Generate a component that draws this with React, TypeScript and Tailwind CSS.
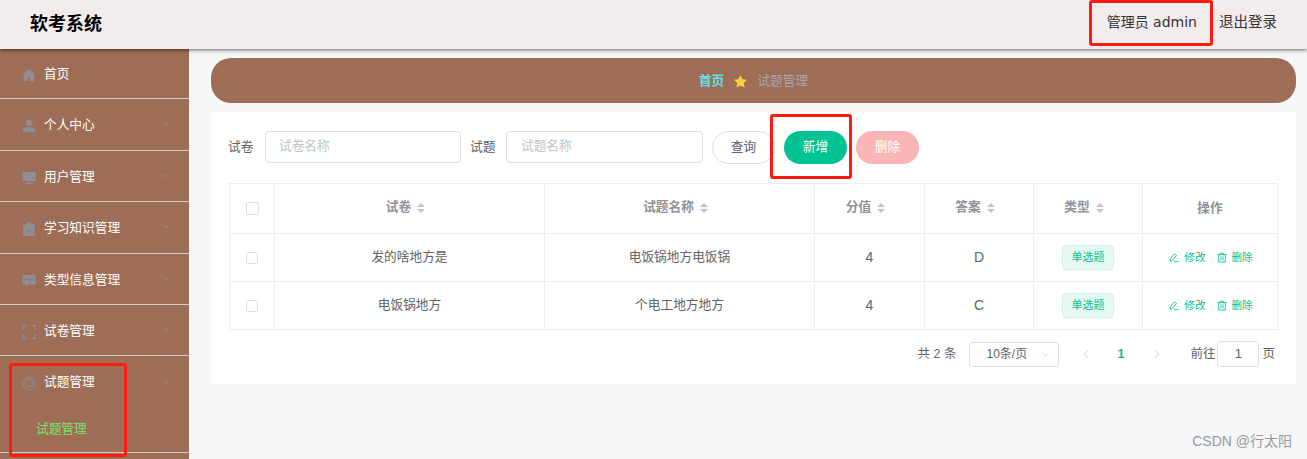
import { ChevronDown, ChevronUp, ChevronLeft, ChevronRight } from 'lucide-react';

const cjk = "font-['Liberation_Sans','Noto_Sans_CJK_SC',sans-serif]";

function HomeIcon() {
    return <svg viewBox="0 0 16 16" className="w-[14px] h-[14px]"><path d="M8 1 .5 8H2v7h4.500v-4.500h3V15H14V8h1.500z" fill="#8f8d96" /></svg>;
}
function UserIcon() {
    return <svg viewBox="0 0 16 16" className="w-[14px] h-[14px]"><circle cx="8" cy="4.500" r="3.800" fill="#8f8d96" /><path d="M1 15v-2.500C1 10.500 3 9.500 4.500 9.500h7c1.500 0 3.500 1 3.500 3V15z" fill="#8f8d96" /></svg>;
}
function MonitorIcon() {
    return <svg viewBox="0 0 16 16" className="w-[14px] h-[14px]"><path d="M.5 1h15v10.500H.5zM7 12h2v1.500h3.500V15h-9v-1.500H7z" fill="#8f8d96" /></svg>;
}
function ClipboardIcon() {
    return <svg viewBox="0 0 16 16" className="w-[14px] h-[14px]"><path d="M1.500 2.500H5V.5h6v2h3.500V16h-13z" fill="#8f8d96" /><path d="m5 9.500 2.200 2.300L11 7.500" fill="none" stroke="#9d6e55" strokeWidth="1" /></svg>;
}
function ChatIcon() {
    return <svg viewBox="0 0 16 16" className="w-[14px] h-[14px]"><path d="M.5 1h15v11H7.500L4.500 15v-3h-4z" fill="#8f8d96" /><circle cx="4.800" cy="6.500" r="1" fill="#9d6e55" /><circle cx="8" cy="6.500" r="1" fill="#9d6e55" /><circle cx="11.200" cy="6.500" r="1" fill="#9d6e55" /></svg>;
}
function FrameIcon() {
    return <svg viewBox="0 0 16 16" className="w-[14px] h-[14px]"><path d="M5 1H1v4M11 1h4v4M5 15H1v-4M11 15h4v-4" fill="none" stroke="#8f8d96" strokeWidth="1.500" /></svg>;
}
function RingIcon() {
    return <svg viewBox="0 0 16 16" className="w-[15px] h-[15px]"><circle cx="8" cy="8" r="7.200" fill="none" stroke="#8f8d96" strokeWidth="1.100" /><circle cx="8" cy="7.500" r="4.200" fill="none" stroke="#8f8d96" strokeWidth="1.300" /></svg>;
}
function EditIcon() {
    return <svg viewBox="0 0 12 12" className="w-[10px] h-[11px]" fill="none" stroke="#00c292" strokeWidth="1"><path d="M6.500 1.500 9 3.500 4 9.500 1.500 10.500 1.800 7.500z" /><path d="M6 11h5.500" /></svg>;
}
function TrashIcon() {
    return <svg viewBox="0 0 12 12" className="w-[10px] h-[11px]" fill="none" stroke="#00c292" strokeWidth="1"><path d="M.5 2.500h11M4 2.500V.8h4v1.700M2 2.500v9h8v-9M4.800 4.500v5M7.200 4.500v5" /></svg>;
}
function SortCaret() {
    return (
        <span className="inline-flex flex-col gap-[2px] ml-[6px] align-middle">
            <span className="w-0 h-0 border-x-[4px] border-x-transparent border-b-[4px] border-b-[#c0c4cc]" />
            <span className="w-0 h-0 border-x-[4px] border-x-transparent border-t-[4px] border-t-[#c0c4cc]" />
        </span>
    );
}

const menus = [
    { label: '首页', icon: <HomeIcon />, h: 'h-[50px] pt-[2px]', arrow: false },
    { label: '个人中心', icon: <UserIcon />, h: 'h-[52px] pt-[3px]', arrow: true },
    { label: '用户管理', icon: <MonitorIcon />, h: 'h-[51px] pt-[3px]', arrow: true },
    { label: '学习知识管理', icon: <ClipboardIcon />, h: 'h-[52px] pt-[2px]', arrow: true },
    { label: '类型信息管理', icon: <ChatIcon />, h: 'h-[51px] pt-[3px]', arrow: true },
    { label: '试卷管理', icon: <FrameIcon />, h: 'h-[51px] pt-[3px]', arrow: true },
];

const rows = [
    { paper: '发的啥地方是', name: '电饭锅地方电饭锅', score: 4, answer: 'D' },
    { paper: '电饭锅地方', name: '个电工地方地方', score: 4, answer: 'C' },
];

const headers = ['试卷', '试题名称', '分值', '答案', '类型'];

export default function App() {
    return (
        <div className={`${cjk} w-[1307px] h-[459px] overflow-hidden relative bg-[#f6f7f9] text-[12.7px]`}>
            {/* 상단 헤더 */}
            <header className="relative z-10 h-[49px] bg-[#f3ecec] flex items-center justify-between pl-[30px] pr-[30px] shadow-[0_1px_4px_rgba(0,0,0,0.6)]">
                <h1 className="text-[18px] font-bold text-black">软考系统</h1>
                <div className="flex items-center gap-[22px] text-[14.500px] text-[#333] pb-[4px]">
                    <span className="font-['DejaVu_Sans','Noto_Sans_CJK_SC',sans-serif] text-[14px]">管理员 admin</span>
                    <span>退出登录</span>
                </div>
            </header>

            <div className="flex h-[410px]">
                <aside className="w-[189px] shrink-0 bg-[#9d6e55] text-white">
                    {menus.map((m) => (
                        <div key={m.label} className={`${m.h} flex items-center pl-[22px] pr-[17px] border-b border-[#d2cdcb]`}>
                            <span className="w-[14px] mr-[8px] flex justify-center">{m.icon}</span>
                            <span className="flex-1">{m.label}</span>
                            {m.arrow && <ChevronDown size={13} strokeWidth={1} className="text-[#b99d8c] -mt-[5px]" />}
                        </div>
                    ))}
                    <div className="h-[97px] border-b border-[#d2cdcb]">
                        <div className="h-[52px] pt-[2px] flex items-center pl-[22px] pr-[17px]">
                            <span className="w-[14px] mr-[8px] flex justify-center"><RingIcon /></span>
                            <span className="flex-1">试题管理</span>
                            <ChevronUp size={13} strokeWidth={1} className="text-[#b99d8c] -mt-[2px]" />
                        </div>
                        <div className="pl-[36px] pt-[12px] text-[#7ee06e]">试题管理</div>
                    </div>
                </aside>

                <main className="w-[1085px] ml-[22px] pt-[9px]">
                    <nav className="h-[45px] pt-[2px] rounded-[20px] bg-[#9d6e55] flex items-center justify-center">
                        <span className="font-bold text-[#5fe3e8]">首页</span>
                        <svg viewBox="0 0 24 24" className="w-[15px] h-[15px] mx-[9px]"><path d="m12 1.500 3.300 6.700 7.200 1.100-5.200 5.100 1.200 7.300L12 18.200l-6.500 3.500 1.200-7.300L1.500 9.300l7.200-1.100z" fill="#fbd13c" /></svg>
                        <span className="text-[#a8a4ae]">试题管理</span>
                    </nav>

                    <section className="mt-[9px] h-[272px] bg-white pl-[17px] pr-[18px] pt-[19px]">
                        <div className="flex items-start h-[33px] text-[#606266]">
                            <span className="w-[37px] leading-[32px]">试卷</span>
                            <div className="w-[196px] h-[32px] border border-[#dcdfe6] rounded-[4px] flex items-center pl-[13px] text-[#c0c4cc]">试卷名称</div>
                            <span className="ml-[9px] w-[36px] leading-[32px]">试题</span>
                            <div className="w-[197px] h-[32px] border border-[#dcdfe6] rounded-[4px] flex items-center pl-[14px] text-[#c0c4cc]">试题名称</div>
                            <button className="ml-[9px] w-[63px] h-[33px] rounded-full border border-[#dcdfe6] bg-white text-[#606266]">查询</button>
                            <button className="ml-[9px] w-[63px] h-[33px] rounded-full bg-[#00c292] text-white">新增</button>
                            <button className="ml-[9px] w-[63px] h-[33px] rounded-full bg-[#fab6b6] text-white">删除</button>
                        </div>

                        <table className="mt-[19px] ml-[1px] w-[1048px] table-fixed border-collapse text-[#606266]">
                            <colgroup>
                                <col className="w-[45px]" />
                                <col className="w-[270px]" />
                                <col className="w-[270px]" />
                                <col className="w-[110px]" />
                                <col className="w-[109px]" />
                                <col className="w-[109px]" />
                                <col className="w-[135px]" />
                            </colgroup>
                            <thead>
                                <tr className="h-[50px] text-[#909399] font-bold">
                                    <th className="border border-[#ebeef5]">
                                        <span className="block mx-auto w-[13px] h-[13px] border border-[#dcdfe6] rounded-[2px]" />
                                    </th>
                                    {headers.map((h) => (
                                        <th key={h} className="border border-[#ebeef5] pr-[8px] pb-[1px]">{h}<SortCaret /></th>
                                    ))}
                                    <th className="border border-[#ebeef5]">操作</th>
                                </tr>
                            </thead>
                            <tbody>
                                {rows.map((r) => (
                                    <tr key={r.paper} className="h-[48px] text-center">
                                        <td className="border border-[#ebeef5]">
                                            <span className="block mx-auto w-[12px] h-[12px] border border-[#dcdfe6] rounded-[2px]" />
                                        </td>
                                        <td className="border border-[#ebeef5]">{r.paper}</td>
                                        <td className="border border-[#ebeef5]">{r.name}</td>
                                        <td className="border border-[#ebeef5] text-[14px]">{r.score}</td>
                                        <td className="border border-[#ebeef5] text-[14px]">{r.answer}</td>
                                        <td className="border border-[#ebeef5]">
                                            <span className="inline-flex items-center justify-center w-[52px] h-[25px] rounded-[4px] bg-[#e6f9f4] border border-[#ccf3e9] text-[#00c292] text-[11px]">单选题</span>
                                        </td>
                                        <td className="border border-[#ebeef5] text-[#00c292] text-[10.600px]">
                                            <div className="flex items-center justify-center gap-[11px] pl-[2px]">
                                                <span className="flex items-center gap-[5px]"><EditIcon />修改</span>
                                                <span className="flex items-center gap-[5px]"><TrashIcon />删除</span>
                                            </div>
                                        </td>
                                    </tr>
                                ))}
                            </tbody>
                        </table>

                        <div className="mt-[11px] pr-[3px] flex items-center justify-end h-[26px] text-[12.500px] text-[#606266]">
                            <span>共 2 条</span>
                            <div className="ml-[12px] w-[90px] h-[25px] border border-[#dcdfe6] rounded-[3px] flex items-center pl-[17px] pr-[6px] text-[12px]">
                                <span className="flex-1">10条/页</span>
                                <ChevronDown size={13} strokeWidth={1} className="text-[#c0c4cc]" />
                            </div>
                            <ChevronLeft size={14} strokeWidth={1.500} className="ml-[20px] text-[#c0c4cc]" />
                            <span className="ml-[25px] font-bold text-[#00c292]">1</span>
                            <ChevronRight size={14} strokeWidth={1.500} className="ml-[26px] text-[#c0c4cc]" />
                            <span className="ml-[26px]">前往</span>
                            <div className="ml-[2px] w-[42px] h-[26px] border border-[#dcdfe6] rounded-[3px] flex items-center justify-center text-[13px]">1</div>
                            <span className="ml-[3px]">页</span>
                        </div>
                    </section>
                </main>
            </div>

            {/* 빨간 표시 박스 */}
            <div className="absolute left-[1089px] top-0 w-[124px] h-[46px] border-[3px] border-[#ff1a12] rounded-[3px] z-20" />
            <div className="absolute left-[770px] top-[114px] w-[82px] h-[65px] border-[3px] border-[#ff1a12] rounded-[3px] z-20" />
            <div className="absolute left-[9px] top-[363px] w-[118px] h-[94px] border-[3px] border-[#ff1a12] rounded-[3px] z-20" />
            <span className="absolute right-[15px] bottom-[7px] z-20 text-[14px] text-[#999]">CSDN @行太阳</span>
        </div>
    );
}
